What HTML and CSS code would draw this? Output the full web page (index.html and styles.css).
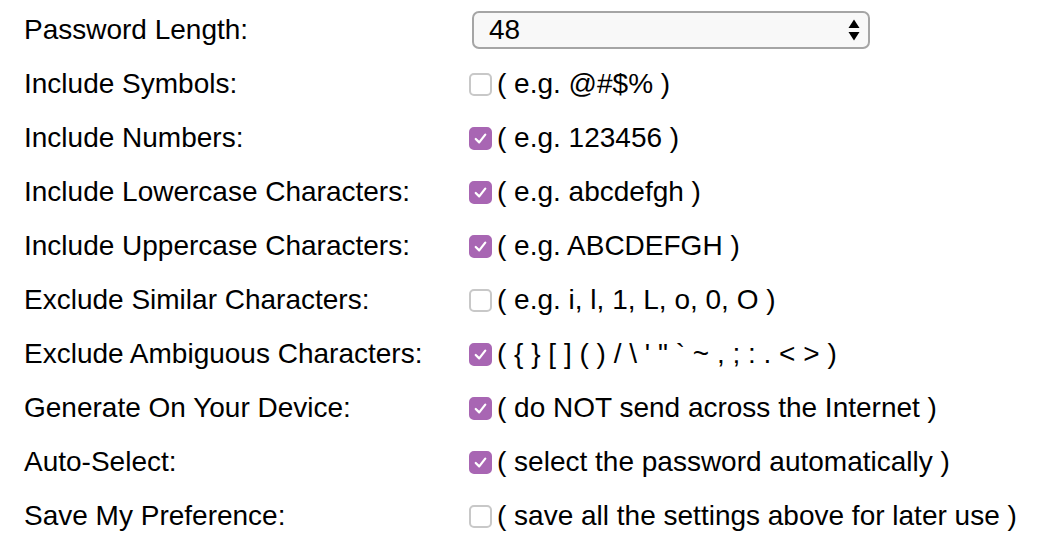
FILE: index.html
```html
<!DOCTYPE html>
<html>
<head>
<meta charset="utf-8">
<link rel="stylesheet" href="styles.css">
</head>
<body>
<div class="form">
  <div class="label">Password Length:</div>
  <div class="field">
    <div class="select"><span class="select-value">48</span>
      <svg class="arrows" width="12" height="24" viewBox="0 0 12 24"><path d="M6 1.5 L11.5 10 L0.5 10 Z" fill="#000"/><path d="M6 22.5 L11.5 14 L0.5 14 Z" fill="#000"/></svg>
    </div>
  </div>

  <div class="label">Include Symbols:</div>
  <div class="field"><span class="cb"></span><span class="hint">( e.g. @#$% )</span></div>

  <div class="label">Include Numbers:</div>
  <div class="field"><span class="cb on"><svg viewBox="0 0 22 22"><path d="M5.5 11.5 L9.5 15.5 L16.5 6.5" fill="none" stroke="#fff" stroke-width="2.6" stroke-linecap="round" stroke-linejoin="round"/></svg></span><span class="hint">( e.g. 123456 )</span></div>

  <div class="label">Include Lowercase Characters:</div>
  <div class="field"><span class="cb on"><svg viewBox="0 0 22 22"><path d="M5.5 11.5 L9.5 15.5 L16.5 6.5" fill="none" stroke="#fff" stroke-width="2.6" stroke-linecap="round" stroke-linejoin="round"/></svg></span><span class="hint">( e.g. abcdefgh )</span></div>

  <div class="label">Include Uppercase Characters:</div>
  <div class="field"><span class="cb on"><svg viewBox="0 0 22 22"><path d="M5.5 11.5 L9.5 15.5 L16.5 6.5" fill="none" stroke="#fff" stroke-width="2.6" stroke-linecap="round" stroke-linejoin="round"/></svg></span><span class="hint">( e.g. ABCDEFGH )</span></div>

  <div class="label">Exclude Similar Characters:</div>
  <div class="field"><span class="cb"></span><span class="hint">( e.g. i, l, 1, L, o, 0, O )</span></div>

  <div class="label">Exclude Ambiguous Characters:</div>
  <div class="field"><span class="cb on"><svg viewBox="0 0 22 22"><path d="M5.5 11.5 L9.5 15.5 L16.5 6.5" fill="none" stroke="#fff" stroke-width="2.6" stroke-linecap="round" stroke-linejoin="round"/></svg></span><span class="hint">( { } [ ] ( ) / \ ' " ` ~ , ; : . &lt; &gt; )</span></div>

  <div class="label">Generate On Your Device:</div>
  <div class="field"><span class="cb on"><svg viewBox="0 0 22 22"><path d="M5.5 11.5 L9.5 15.5 L16.5 6.5" fill="none" stroke="#fff" stroke-width="2.6" stroke-linecap="round" stroke-linejoin="round"/></svg></span><span class="hint">( do NOT send across the Internet )</span></div>

  <div class="label">Auto-Select:</div>
  <div class="field"><span class="cb on"><svg viewBox="0 0 22 22"><path d="M5.5 11.5 L9.5 15.5 L16.5 6.5" fill="none" stroke="#fff" stroke-width="2.6" stroke-linecap="round" stroke-linejoin="round"/></svg></span><span class="hint">( select the password automatically )</span></div>

  <div class="label">Save My Preference:</div>
  <div class="field"><span class="cb"></span><span class="hint">( save all the settings above for later use )</span></div>
</div>
</body>
</html>
```

FILE: styles.css
```css
html, body {
  margin: 0;
  padding: 0;
  background: #fff;
}
body {
  font-family: "Liberation Sans", Arial, sans-serif;
  font-size: 28px;
  color: #000;
}
.form {
  display: grid;
  grid-template-columns: 445px 1fr;
  grid-auto-rows: 54px;
  padding: 3px 0 0 24px;
}
.label {
  display: flex;
  align-items: center;
}
.field {
  display: flex;
  align-items: center;
}
.select {
  margin-left: 3px;
  width: 398px;
  height: 38px;
  box-sizing: border-box;
  border: 2px solid #a5a5a5;
  border-radius: 7px;
  background: #f8f8f8;
  display: flex;
  align-items: center;
  justify-content: space-between;
  padding: 0 8px 0 15px;
}
.arrows {
  display: block;
}
.cb {
  width: 23px;
  height: 23px;
  box-sizing: border-box;
  border: 2px solid #c8c8c8;
  border-radius: 5px;
  background: #fff;
  margin-right: 5px;
  flex: none;
  display: flex;
}
.cb.on {
  background: #a866b3;
  border-color: #a866b3;
}
.cb svg {
  width: 100%;
  height: 100%;
}
.hint {
  white-space: pre;
}
```
